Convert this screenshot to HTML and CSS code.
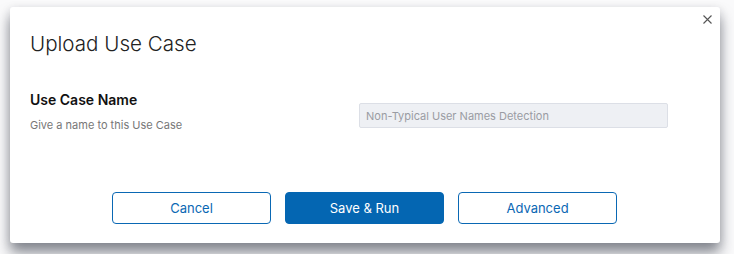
FILE: index.html
```html
<!DOCTYPE html>
<html lang="en">
<head>
    <meta charset="UTF-8">
    <meta name="viewport" content="width=device-width, initial-scale=1.0">
    <title>Upload Use Case</title>
    <link rel="stylesheet" href="styles.css">
</head>
<body>
    <div class="modal">
        <!-- Close button -->
        <button class="close-btn" aria-label="Close">
            <svg width="9" height="9" viewBox="0 0 9 9">
                <path d="M0.5 0.5 L8.5 8.5 M8.5 0.5 L0.5 8.5" stroke="#555" stroke-width="1.1" fill="none"/>
            </svg>
        </button>

        <h1 class="modal-title">Upload Use Case</h1>

        <!-- Name field -->
        <div class="field-row">
            <div class="field-label">
                <div class="label-name">Use Case Name</div>
                <div class="label-hint">Give a name to this Use Case</div>
            </div>
            <input class="field-input" type="text" placeholder="Non-Typical User Names Detection" disabled>
        </div>

        <!-- Actions -->
        <div class="actions">
            <button class="btn btn-outline">Cancel</button>
            <button class="btn btn-primary">Save &amp; Run</button>
            <button class="btn btn-outline">Advanced</button>
        </div>
    </div>
</body>
</html>
```

FILE: styles.css
```css
body {
    margin: 0;
    padding: 7px 0 11px 10px;
    font-family: Inter, "Noto Sans", Arial, sans-serif;
    background-color: #fafafb;
}
.modal {
    position: relative;
    box-sizing: border-box;
    width: 710px;
    height: 236px;
    padding: 24px 52px 19px 20px;
    background-color: #fff;
    border-radius: 3px;
    box-shadow: 0 10px 14px rgba(30, 35, 50, 0.5), 0 2px 10px rgba(30, 35, 50, 0.12);
    display: flex;
    flex-direction: column;
}
.close-btn {
    position: absolute;
    top: 8px;
    right: 8px;
    padding: 0;
    border: none;
    background: none;
    width: 9px;
    height: 9px;
    cursor: pointer;
}
.close-btn svg {
    display: block;
}
.modal-title {
    margin: 0;
    font-size: 20.6px;
    font-weight: 300;
    line-height: 25px;
    color: #222;
}
.field-row {
    display: grid;
    grid-template-columns: 1fr 309px;
    margin-top: 36px;
}
.label-name {
    font-size: 14px;
    font-weight: 600;
    line-height: 16px;
    color: #111;
}
.label-hint {
    margin-top: 10px;
    font-size: 11px;
    line-height: 14px;
    color: #777;
}
.field-input {
    box-sizing: border-box;
    margin-top: 11px;
    height: 25px;
    padding: 0 6px;
    font-family: inherit;
    font-size: 11px;
    background-color: #eef0f4;
    border: 1px solid #dcdfe6;
    border-radius: 2px;
}
.field-input::placeholder {
    color: #9a9ca3;
}
.actions {
    margin-top: auto;
    margin-right: -31px;
    display: flex;
    justify-content: center;
    gap: 14px;
}
.btn {
    box-sizing: border-box;
    width: 159px;
    height: 32px;
    font-family: inherit;
    font-size: 13px;
    border-radius: 4px;
    cursor: pointer;
}
.btn-outline {
    background-color: #fff;
    color: #0a68b4;
    border: 1px solid #0a68b4;
}
.btn-primary {
    background-color: #0466b2;
    color: #fff;
    border: 1px solid #0466b2;
}
```
